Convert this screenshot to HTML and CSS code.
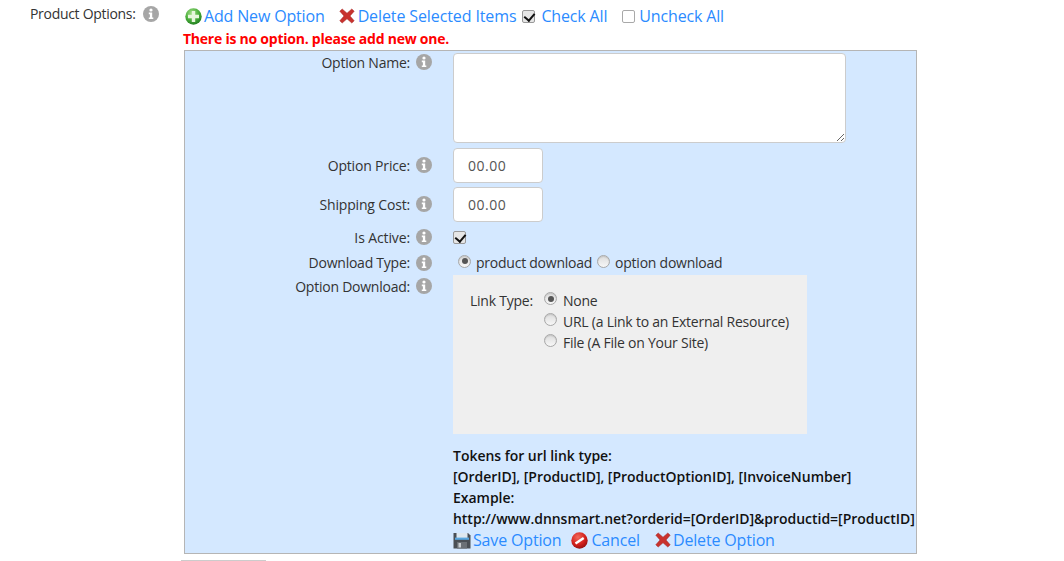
FILE: index.html
```html
<!DOCTYPE html>
<html lang="en">
<head>
<meta charset="utf-8">
<title>Product Options</title>
<link rel="stylesheet" href="styles.css">
</head>
<body>
<svg class="defs" width="0" height="0" aria-hidden="true">
  <defs>
    <symbol id="info" viewBox="0 0 16 16">
      <circle cx="8" cy="8" r="8" fill="#a6a6a6"/>
      <circle cx="8" cy="4" r="1.6" fill="#fff"/>
      <path d="M5.8 6.6H9.2V11.4H10.3V13H5.8V11.4H6.9V8.2H5.8Z" fill="#fff"/>
    </symbol>
    <radialGradient id="g-green" cx="40%" cy="30%" r="75%">
      <stop offset="0" stop-color="#a5e08a"/><stop offset="0.55" stop-color="#4caf3c"/><stop offset="1" stop-color="#1d7a1d"/>
    </radialGradient>
    <radialGradient id="g-red" cx="40%" cy="30%" r="75%">
      <stop offset="0" stop-color="#f26a5c"/><stop offset="0.6" stop-color="#d3201c"/><stop offset="1" stop-color="#8e0f0f"/>
    </radialGradient>
    <symbol id="add" viewBox="0 0 17 17">
      <circle cx="8.5" cy="8.5" r="8.2" fill="url(#g-green)"/>
      <path d="M6.8 3H10.2V6.8H14V10.2H10.2V14H6.8V10.2H3V6.8H6.8Z" fill="#e6f6dc"/>
    </symbol>
    <symbol id="del" viewBox="0 0 16 16">
      <path d="M.8 3.2 3.2 1 8 5.2 12.8 1 15.2 3.2 11 8 15.2 12.8 12.8 15 8 10.8 3.2 15 .8 12.8 5 8Z" fill="#c8322e" stroke="#a32422" stroke-width=".5"/>
    </symbol>
    <symbol id="save" viewBox="0 0 18 17">
      <path d="M.5 1H15L17.5 3.5V16.5H.5Z" fill="#4a4f55"/>
      <rect x="3.5" y="1" width="11" height="6" fill="#dfe8ef"/>
      <rect x="2" y="5.6" width="14" height="2.2" fill="#5aa7e0"/>
      <rect x="4" y="10" width="10" height="6.5" fill="#6b7076"/>
      <rect x="5.5" y="11" width="2.5" height="4.5" fill="#c8ccd0"/>
    </symbol>
    <symbol id="cancel" viewBox="0 0 17 17">
      <circle cx="8.5" cy="8.5" r="8.2" fill="url(#g-red)"/>
      <path d="M3.8 10.6 12 5 13.4 7 5.2 12.6Z" fill="#fff"/>
    </symbol>
  </defs>
</svg>

<main class="page">
  <div class="prefix">
    <span class="main-label">Product Options:</span>
    <svg class="info"><use href="#info"/></svg>
  </div>
  <div class="content">
    <div class="toolbar">
      <a class="tool tool-add" href="#"><svg class="ico-add"><use href="#add"/></svg>Add New Option</a>
      <a class="tool tool-del" href="#"><svg class="ico-del"><use href="#del"/></svg>Delete Selected Items</a>
      <span class="tool tool-check"><span class="check on"></span><a href="#">Check All</a></span>
      <span class="tool tool-uncheck"><span class="check"></span><a href="#">Uncheck All</a></span>
    </div>
    <p class="error">There is no option. please add new one.</p>

    <section class="panel">
      <div class="row row-name">
        <div class="label">Option Name:<svg class="info"><use href="#info"/></svg></div>
        <textarea class="area"></textarea>
      </div>
      <div class="row row-input">
        <div class="label">Option Price:<svg class="info"><use href="#info"/></svg></div>
        <input class="field" type="text" value="00.00">
      </div>
      <div class="row row-input">
        <div class="label">Shipping Cost:<svg class="info"><use href="#info"/></svg></div>
        <input class="field" type="text" value="00.00">
      </div>
      <div class="row row-active">
        <div class="label">Is Active:<svg class="info"><use href="#info"/></svg></div>
        <span class="check on"></span>
      </div>
      <div class="row row-type">
        <div class="label">Download Type:<svg class="info"><use href="#info"/></svg></div>
        <div class="radios">
          <span class="radio on"></span><span>product download</span>
          <span class="radio second"></span><span>option download</span>
        </div>
      </div>
      <div class="row row-download">
        <div class="label">Option Download:<svg class="info"><use href="#info"/></svg></div>
        <div class="download">
          <div class="linkbox">
            <span class="linktype">Link Type:</span>
            <div class="linklist">
              <div class="linkitem"><span class="radio on"></span><span>None</span></div>
              <div class="linkitem"><span class="radio"></span><span>URL (a Link to an External Resource)</span></div>
              <div class="linkitem"><span class="radio"></span><span>File (A File on Your Site)</span></div>
            </div>
          </div>
          <div class="tokens">
            <div>Tokens for url link type:</div>
            <div>[OrderID], [ProductID], [ProductOptionID], [InvoiceNumber]</div>
            <div>Example:</div>
            <div>http://www.dnnsmart.net?orderid=[OrderID]&amp;productid=[ProductID]</div>
          </div>
          <div class="actions">
            <a href="#"><svg class="ico-save"><use href="#save"/></svg>Save Option</a>
            <a href="#"><svg class="ico-cancel"><use href="#cancel"/></svg>Cancel</a>
            <a href="#"><svg class="ico-del"><use href="#del"/></svg>Delete Option</a>
          </div>
        </div>
      </div>
    </section>
    <div class="bottom-rule"></div>
  </div>
</main>
</body>
</html>
```
FILE: styles.css
```css
* { box-sizing: border-box; }
html, body { margin: 0; padding: 0; }
body {
  height: 561px;
  overflow: hidden;
  background: #fff;
  color: #333;
  font: 14px/20px "Open Sans", sans-serif;
  letter-spacing: -.24px;
}
.defs { position: absolute; }
a { color: #2b8bff; text-decoration: none; }

.page { display: flex; }
.prefix {
  width: 183px;
  padding: 4px 0 0 30px;
  display: flex;
  align-items: flex-start;
}
.main-label { color: #333; letter-spacing: -.3px; }
.info { width: 16px; height: 16px; flex: none; }
.prefix .info { margin: 2px 0 0 7px; }

.content { width: 734px; }
.toolbar {
  display: flex;
  height: 32px;
  padding: 4px 0 0 2px;
  font-size: 16px;
  line-height: 24px;
  letter-spacing: -.16px;
}
.tool { display: flex; align-items: center; height: 24px; }
.ico-add { width: 17px; height: 17px; margin-right: 2px; flex: none; }
.ico-del { width: 16px; height: 16px; margin-right: 3px; flex: none; }
.ico-save { width: 18px; height: 17px; margin-right: 2px; flex: none; }
.ico-cancel { width: 17px; height: 17px; margin-right: 3px; flex: none; }
.tool-del { margin-left: 14px; letter-spacing: -.11px; }
.tool-check { margin-left: 6px; }
.tool-uncheck { margin-left: 15px; }
.tool .check { margin-right: 6px; }
.tool-uncheck .check { margin-right: 4px; }

.check {
  display: inline-block;
  position: relative;
  width: 13px;
  height: 13px;
  flex: none;
  background: #fff;
  border: 1px solid #a9a9a9;
  border-radius: 2px;
}
.check.on { background: #e6e6e6; border-color: #999; }
.check.on::after {
  content: "";
  position: absolute;
  left: 3px;
  top: 0;
  width: 5px;
  height: 8px;
  border: solid #111;
  border-width: 0 2px 2px 0;
  transform: rotate(40deg);
}

.error {
  margin: 0;
  height: 18px;
  line-height: 14px;
  font-weight: 700;
  color: #f00;
}

.panel {
  height: 504px;
  margin-left: 1px;
  background: #d4e8ff;
  border: 1px solid #b5b5b5;
  padding-top: 2px;
}
.row { display: flex; }
.label {
  width: 268px;
  flex: none;
  display: flex;
  justify-content: flex-end;
  align-items: flex-start;
  padding-right: 21px;
  color: #333;
}
.label .info { margin: 0 0 0 6px; }
.row-name { height: 95px; }
.row-name .label .info { margin-top: 1px; }
.area {
  width: 393px;
  height: 90px;
  display: block;
  background: #fff;
  border: 1px solid #ccc;
  border-radius: 4px;
  margin: 0;
}
.row-input { height: 39px; }
.row-input .label { padding-top: 8px; letter-spacing: -.17px; }
.row-input .label .info { margin-top: 1px; }
.field {
  width: 90px;
  height: 35px;
  border: 1px solid #ccc;
  border-radius: 4px;
  background: #fff;
  padding: 0 14px;
  color: #555;
  font: 14px "Open Sans", sans-serif;
  letter-spacing: .5px;
}
.row-active { height: 27px; padding-top: 2px; }
.row-active .label { letter-spacing: -.12px; }
.row-active .label .info { margin-top: 1px; }
.row-active .check { margin: 3px 0 0 0; }
.row-type { height: 22px; }
.row-type .label .info { margin-top: 2px; }
.radios { display: flex; align-items: center; height: 20px; padding-left: 5px; }
.radio {
  display: inline-block;
  position: relative;
  width: 13px;
  height: 13px;
  flex: none;
  margin-right: 5px;
  border: 1px solid #a8a8a8;
  border-radius: 50%;
  background: linear-gradient(#dcdcdc, #f7f7f7);
  box-shadow: inset 0 1px 1px #c4c4c4;
  transform: translateY(-2px);
}
.radio.on::after {
  content: "";
  position: absolute;
  left: 2.5px;
  top: 2.5px;
  width: 6px;
  height: 6px;
  border-radius: 50%;
  background: #555;
}
.radio.second { margin-left: 5px; }
.row-download { flex: 1; }
.row-download .label { padding-top: 2px; }
.row-download .label .info { margin-top: 1px; }
.download { flex: 1; min-width: 0; }

.linkbox {
  width: 354px;
  height: 159px;
  background: #efefef;
  display: flex;
  padding: 15px 0 0 17px;
}
.linktype { width: 74px; flex: none; margin-top: 1px; }
.linkitem { display: flex; align-items: center; height: 21px; }
.linkitem .radio { margin-right: 6px; }
.tokens {
  margin-top: 11px;
  font-weight: 600;
  color: #111;
  line-height: 21px;
  letter-spacing: -.03px;
  white-space: nowrap;
}
.actions {
  display: flex;
  gap: 10px;
  height: 24px;
  margin-top: -1px;
  font-size: 16px;
  line-height: 24px;
  letter-spacing: -.16px;
}
.actions a { display: flex; align-items: center; }
.actions a + a + a { margin-left: 5px; }
.actions .ico-del { margin-right: 2px; }
.bottom-rule {
  width: 85px;
  height: 1px;
  background: #ccc;
  margin: 6px 0 0 -2px;
}
```
